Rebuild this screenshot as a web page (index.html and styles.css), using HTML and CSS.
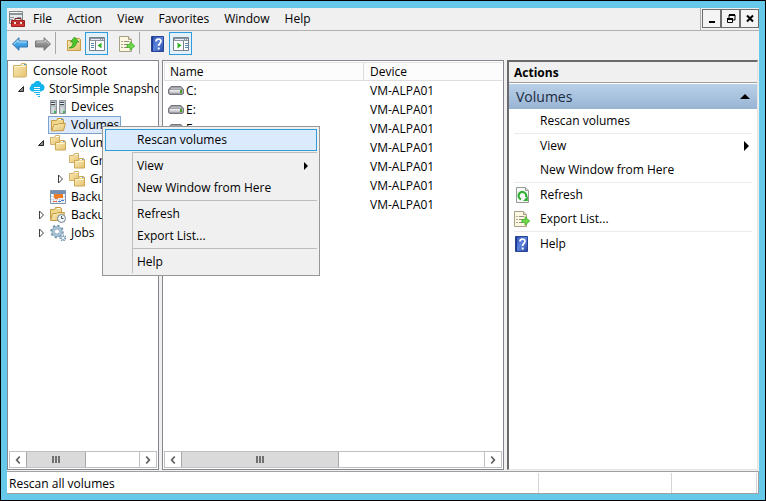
FILE: index.html
```html
<!DOCTYPE html>
<html lang="en">
<head>
<meta charset="utf-8">
<title>StorSimple Snapshot Manager</title>
<link rel="stylesheet" href="styles.css">
</head>
<body>
<svg class="sprite" aria-hidden="true">
  <defs>
    <linearGradient id="gold" x1="0" y1="0" x2="1" y2="1"><stop offset="0" stop-color="#fbedb8"/><stop offset="1" stop-color="#e4c272"/></linearGradient>
    <linearGradient id="blue" x1="0" y1="0" x2="0" y2="1"><stop offset="0" stop-color="#7cc9f5"/><stop offset="1" stop-color="#1583d8"/></linearGradient>
    <linearGradient id="gray" x1="0" y1="0" x2="0" y2="1"><stop offset="0" stop-color="#b5b5b5"/><stop offset="1" stop-color="#6d6d6d"/></linearGradient>
    <linearGradient id="navy" x1="0" y1="0" x2="1" y2="1"><stop offset="0" stop-color="#2c4fb0"/><stop offset=".5" stop-color="#5c83de"/><stop offset="1" stop-color="#2949a6"/></linearGradient>
    <linearGradient id="metal" x1="0" y1="0" x2="0" y2="1"><stop offset="0" stop-color="#f4f4f6"/><stop offset="1" stop-color="#b4b4bc"/></linearGradient>
  </defs>
  <symbol id="folder" viewBox="0 0 16 16">
    <path d="M1.500 2.500h7l1-2h4l1 1v11.500l-1 1h-12z" fill="url(#gold)" stroke="#d3b069"/>
    <path d="M2.500 3.500h11" stroke="#fff6cd"/><path d="M10 1.500h3" stroke="#fff"/><path d="M12 1.500h2" stroke="#4f97d4"/>
  </symbol>
  <symbol id="folder-open" viewBox="0 0 16 16">
    <path d="M1.500 13V3.500h5l1-2h5l1 1V8" fill="#f0d78e" stroke="#c49a45"/>
    <path d="M9 2.500h3" stroke="#fff"/><path d="M11 2.500h2" stroke="#4f97d4"/>
    <path d="M1.500 14l2.500-6.500h4l1-1h6.500l-2 7z" fill="url(#gold)" stroke="#c49a45"/>
  </symbol>
  <symbol id="folders" viewBox="0 0 16 16">
    <path d="M.5 2.500h4l1-2h4v9H.5z" fill="url(#gold)" stroke="#d3b069"/><path d="M6 1.500h3" stroke="#fff"/>
    <path d="M5.500 7.500h4l1-2h4l1 1v8.500h-10z" fill="url(#gold)" stroke="#cca754"/><path d="M6.500 8.500h8" stroke="#fff6cd"/><path d="M11 6.500h2" stroke="#fff"/><path d="M13 6.500h1.500" stroke="#4f97d4"/>
  </symbol>
  <symbol id="folder-clock" viewBox="0 0 16 16">
    <path d="M.5 12.500V2.500h4l1-2h5l1 1V6" fill="#f0d78e" stroke="#c49a45"/><path d="M7 1.500h3" stroke="#fff"/>
    <path d="M.5 13.500l2-7h4l1-1h7l-2 8z" fill="url(#gold)" stroke="#c49a45"/>
    <circle cx="11.500" cy="11.500" r="4" fill="#eef5fa" stroke="#72828d"/><path d="M11.500 9v2.500h2" fill="none" stroke="#4b5a66"/>
  </symbol>
  <symbol id="cloud" viewBox="0 0 16 16">
    <path d="M3 10.500a3 3 0 0 1-1-5.500A2.500 2.500 0 0 1 5 2.500 3.900 3.900 0 0 1 12.500 3 3.600 3.600 0 0 1 13 10l-1 .5z" fill="#12b4ee"/>
    <path d="M5 6.500h6M5 8.500h6M5 10.500h6M5 12.500h6" stroke="#fff"/><path d="M5 7.500h6M5 9.500h6M5 11.500h6M7 13.500h4M9 15.500h2" stroke="#12b4ee"/>
  </symbol>
  <symbol id="servers" viewBox="0 0 16 16">
    <path d="M.5 1.500h6v13h-6zM9.500 1.500h6v13h-6z" fill="#b9c1c4" stroke="#8b979c"/>
    <path d="M1 3.500h4M1 5.500h4M10 3.500h4M10 5.500h4" stroke="#3f4a4f"/><path d="M1 4.500h4M10 4.500h4" stroke="#eef"/>
    <path d="M1.500 8h3v6h-3zM10.500 8h3v6h-3z" fill="#d3dadd"/><path d="M4 12h2v2H4zM13 12h2v2h-2z" fill="#38b54a"/>
  </symbol>
  <symbol id="calendar" viewBox="0 0 16 16">
    <path d="M.5 1.500h15v13H.5z" fill="#f6f8fb" stroke="#8093ab"/><path d="M1 2h14v3H1z" fill="#7291b5"/>
    <path d="M1 7.500h14M1 10.500h14M3.500 5v9M6.500 5v9M9.500 5v9M12.500 5v9" stroke="#d4dbe4"/>
    <path d="M4 5h9v4H8v1H5V9H4z" fill="#ed7c28"/><path d="M3 12.500h4" stroke="#e06a48"/><path d="M8 12.500h3M11 11.500h3" stroke="#4e7bc8"/>
  </symbol>
  <symbol id="gears" viewBox="0 0 16 16">
    <circle cx="7" cy="6.500" r="5.800" fill="none" stroke="#7795ab" stroke-width="2" stroke-dasharray="2.200 2.300"/>
    <circle cx="7" cy="6.500" r="4" fill="none" stroke="#a5c3d8" stroke-width="2.500"/><circle cx="7" cy="6.500" r="5.200" fill="none" stroke="#7795ab" stroke-width=".6"/><circle cx="7" cy="6.500" r="2.500" fill="#fff" stroke="#7795ab" stroke-width=".7"/>
    <circle cx="13" cy="13" r="2.700" fill="#fff" stroke="#7795ab" stroke-width="1.500" stroke-dasharray="1.400 1"/><circle cx="13" cy="13" r="1.600" fill="none" stroke="#8fb3cc"/>
  </symbol>
  <symbol id="drive" viewBox="0 0 16 16">
    <path d="M3 3.500h10l2.500 3v4l-1 1h-13l-1-1v-4z" fill="#8b8b93" stroke="#76767e"/><path d="M3.500 4.500h9l1.500 2H2z" fill="#b9b9c0"/>
    <path d="M1.500 7h13v3.500h-13z" fill="url(#metal)"/><path d="M12 7h2v3h-2z" fill="#45a32b"/>
  </symbol>
  <symbol id="toolbox" viewBox="0 0 16 16">
    <path d="M.5.5h13v12H.5z" fill="#e6eaec" stroke="#7c8588"/><path d="M1 2h12v2H1z" fill="#8b9699"/><path d="M1 1.500h8" stroke="#fff"/><path d="M1 6.500h4M1 8.500h3M8 6.500h4" stroke="#8b9699"/>
    <path d="M6 10V7.500h6V10" fill="none" stroke="#7c2020"/><path d="M2.500 9.500h13v6h-13z" fill="#d43a35" stroke="#9d201d"/><path d="M2.500 12h13" stroke="#811a18"/><path d="M5 11h2v2H5zM11 11h2v2h-2z" fill="#e9e4e2"/>
  </symbol>
  <symbol id="back" viewBox="0 0 16 16"><path d="M.5 8L7 1.700V5h8.500v6H7v3.300z" fill="url(#blue)" stroke="#3a76ad"/><path d="M2 8l4-4v2h8.500" fill="none" stroke="#a8e0fc"/></symbol>
  <symbol id="forward" viewBox="0 0 16 16"><path d="M15.500 8L9 1.700V5H.5v6H9v3.300z" fill="url(#gray)" stroke="#777"/><path d="M1.500 6H10V4l4 4" fill="none" stroke="#c9c9c9"/></symbol>
  <symbol id="up" viewBox="0 0 16 16">
    <path d="M1.500 4.500h6l1-2h5l1 1v11h-13z" fill="url(#gold)" stroke="#c99d43"/><path d="M10 4.500h3" stroke="#fff"/>
    <path d="M3 12c3-1 4-3 4-6H4.500L8.500 1 13 6h-2.500c0 4-3 6.500-7.500 6z" fill="#4ec62c" stroke="#258f17" stroke-width=".7"/>
  </symbol>
  <symbol id="pane-left" viewBox="0 0 16 16">
    <path d="M.5 1.500h15v13H.5z" fill="#fff" stroke="#77818c"/><path d="M1 2h14v3H1z" fill="#8a96a3"/><path d="M2 3.500h9M12 3.500h1M14 3.500h1" stroke="#e8edf2"/>
    <path d="M6.500 5v9" stroke="#77818c"/><path d="M2 7.500h3M2 9.500h3M2 11.500h3" stroke="#5586ae"/><path d="M12.500 6.500v6L8.500 9.500z" fill="#32b228"/>
  </symbol>
  <symbol id="pane-right" viewBox="0 0 16 16">
    <path d="M.5 1.500h15v13H.5z" fill="#fff" stroke="#77818c"/><path d="M1 2h14v3H1z" fill="#8a96a3"/><path d="M2 3.500h9M12 3.500h1M14 3.500h1" stroke="#e8edf2"/>
    <path d="M10.500 5v9" stroke="#77818c"/><path d="M12 7.500h3M12 9.500h3M12 11.500h3" stroke="#5586ae"/><path d="M4.500 6.500v6l4-3z" fill="#32b228"/>
  </symbol>
  <symbol id="export" viewBox="0 0 16 16">
    <path d="M.5.500h9l3 3v12H.5z" fill="#fdf8df" stroke="#a49f86"/><path d="M9.500.5v3h3" fill="#e6dfbd" stroke="#a49f86"/>
    <path d="M2.500 5.500h1M2.500 8.500h1M2.500 11.500h1" stroke="#555"/><path d="M5 5.500h5M5 8.500h4M5 11.500h4" stroke="#8e8c80"/>
    <path d="M8 8.500h3V5.700l4.800 4.300-4.800 4.300v-2.800H8z" fill="#6ed84a" stroke="#38a321" stroke-width=".7"/>
  </symbol>
  <symbol id="refresh" viewBox="0 0 16 16">
    <path d="M2.500.5h9l3 3v12h-12z" fill="#f7f9f7" stroke="#949b94"/><path d="M11.500.5v3h3" fill="#ddd" stroke="#949b94"/>
    <path d="M7 12.300A3.800 3.800 0 1 1 12 10" fill="none" stroke="#2fae32" stroke-width="2.200"/><path d="M13.800 9v5H9z" fill="#2fae32"/>
  </symbol>
  <symbol id="help" viewBox="0 0 16 16">
    <path d="M1.500.5h12v15h-12z" fill="url(#navy)" stroke="#284392"/><path d="M2.500 1v14" stroke="#183a94"/>
    <path d="M6 5.500C6 2.500 11 2.300 11 5.300c0 2-2.400 2.200-2.400 4.700" fill="none" stroke="#fff" stroke-width="1.700"/><path d="M7.700 11.500h2v2h-2z" fill="#fff"/>
  </symbol>
  <symbol id="minimize" viewBox="0 0 16 16"><path d="M5 10h6v2H5z"/></symbol>
  <symbol id="restore" viewBox="0 0 16 16"><path d="M6 7V4h6v5h-2" fill="none" stroke="#000"/><path d="M6 4h6" stroke="#000" stroke-width="2"/><path d="M4.500 7.500h5v4h-5z" fill="none" stroke="#000"/><path d="M4 8h6" stroke="#000" stroke-width="2"/></symbol>
  <symbol id="close" viewBox="0 0 16 16"><path d="M5 4.500l6 6M11 4.500l-6 6" fill="none" stroke="#000" stroke-width="2"/></symbol>
  <symbol id="chevron-left" viewBox="0 0 16 16"><path d="M10 4L6.500 8l3.500 4" fill="none" stroke="#606060" stroke-width="2"/></symbol>
  <symbol id="chevron-right" viewBox="0 0 16 16"><path d="M6 4l3.500 4L6 12" fill="none" stroke="#606060" stroke-width="2"/></symbol>
  <symbol id="expanded" viewBox="0 0 8 8"><path d="M6.500 1.500v5h-5z" fill="#8a8a8a" stroke="#262626"/></symbol>
  <symbol id="collapsed" viewBox="0 0 8 8"><path d="M2.500 0v8l4-4z" fill="#fff" stroke="#404040"/></symbol>
</svg>

<div class="window">
  <header class="menubar">
    <nav class="menubar-items" aria-label="Main menu">
      <svg class="icon app-icon"><use href="#toolbox"/></svg>
      <button type="button">File</button>
      <button type="button">Action</button>
      <button type="button">View</button>
      <button type="button">Favorites</button>
      <button type="button">Window</button>
      <button type="button">Help</button>
    </nav>
    <div class="window-controls">
      <button type="button" aria-label="Minimize"><svg class="icon"><use href="#minimize"/></svg></button>
      <button type="button" aria-label="Restore"><svg class="icon"><use href="#restore"/></svg></button>
      <button type="button" aria-label="Close"><svg class="icon"><use href="#close"/></svg></button>
    </div>
  </header>

  <div class="toolbar" role="toolbar" aria-label="Standard">
    <button type="button" aria-label="Back"><svg class="icon"><use href="#back"/></svg></button>
    <button type="button" aria-label="Forward"><svg class="icon"><use href="#forward"/></svg></button>
    <span class="tool-divider"></span>
    <button type="button" aria-label="Up one level"><svg class="icon"><use href="#up"/></svg></button>
    <button type="button" class="pressed" aria-label="Console tree" aria-pressed="true"><svg class="icon"><use href="#pane-left"/></svg></button>
    <span class="tool-space"></span>
    <button type="button" aria-label="Export list"><svg class="icon"><use href="#export"/></svg></button>
    <span class="tool-divider"></span>
    <button type="button" aria-label="Help"><svg class="icon"><use href="#help"/></svg></button>
    <button type="button" class="pressed" aria-label="Action pane" aria-pressed="true"><svg class="icon"><use href="#pane-right"/></svg></button>
  </div>

  <main class="panes">
    <section class="pane" aria-label="Console tree">
      <ul class="tree">
        <li class="root"><svg class="icon"><use href="#folder"/></svg><span>Console Root</span></li>
        <li class="level-1"><svg class="twisty"><use href="#expanded"/></svg><svg class="icon"><use href="#cloud"/></svg><span>StorSimple Snapsho</span></li>
        <li class="level-2"><svg class="twisty"></svg><svg class="icon"><use href="#servers"/></svg><span>Devices</span></li>
        <li class="level-2"><svg class="twisty"></svg><span class="selected"><svg class="icon"><use href="#folder-open"/></svg><span>Volumes</span></span></li>
        <li class="level-2"><svg class="twisty"><use href="#expanded"/></svg><svg class="icon"><use href="#folders"/></svg><span>Volume Groups</span></li>
        <li class="level-3"><svg class="twisty"></svg><svg class="icon"><use href="#folders"/></svg><span>Group 1</span></li>
        <li class="level-3"><svg class="twisty"><use href="#collapsed"/></svg><svg class="icon"><use href="#folders"/></svg><span>Group 2</span></li>
        <li class="level-2"><svg class="twisty"></svg><svg class="icon"><use href="#calendar"/></svg><span>Backup Policies</span></li>
        <li class="level-2"><svg class="twisty"><use href="#collapsed"/></svg><svg class="icon"><use href="#folder-clock"/></svg><span>Backup Catalog</span></li>
        <li class="level-2"><svg class="twisty"><use href="#collapsed"/></svg><svg class="icon"><use href="#gears"/></svg><span>Jobs</span></li>
      </ul>
      <div class="scrollbar">
        <button type="button" aria-label="Scroll tree left"><svg class="icon"><use href="#chevron-left"/></svg></button>
        <div class="track"><div class="thumb tree-thumb"><i></i><i></i><i></i></div></div>
        <button type="button" aria-label="Scroll tree right"><svg class="icon"><use href="#chevron-right"/></svg></button>
      </div>
    </section>

    <section class="pane" aria-label="Volumes">
      <div class="list">
        <table>
          <thead><tr><th class="name-column">Name</th><th>Device</th></tr></thead>
          <tbody>
            <tr><td><svg class="icon"><use href="#drive"/></svg>C:</td><td>VM-ALPA01</td></tr>
            <tr><td><svg class="icon"><use href="#drive"/></svg>E:</td><td>VM-ALPA01</td></tr>
            <tr><td><svg class="icon"><use href="#drive"/></svg>F:</td><td>VM-ALPA01</td></tr>
            <tr><td><svg class="icon"><use href="#drive"/></svg>G:</td><td>VM-ALPA01</td></tr>
            <tr><td><svg class="icon"><use href="#drive"/></svg>H:</td><td>VM-ALPA01</td></tr>
            <tr><td><svg class="icon"><use href="#drive"/></svg>I:</td><td>VM-ALPA01</td></tr>
            <tr><td><svg class="icon"><use href="#drive"/></svg>J:</td><td>VM-ALPA01</td></tr>
          </tbody>
        </table>
      </div>
      <div class="scrollbar">
        <button type="button" aria-label="Scroll list left"><svg class="icon"><use href="#chevron-left"/></svg></button>
        <div class="track"><div class="thumb list-thumb"><i></i><i></i><i></i></div></div>
        <button type="button" aria-label="Scroll list right"><svg class="icon"><use href="#chevron-right"/></svg></button>
      </div>
    </section>

    <aside class="actions">
      <h2>Actions</h2>
      <button type="button" class="actions-group" aria-expanded="true">Volumes<span class="arrow-up"></span></button>
      <div class="actions-list">
        <button type="button"><span class="icon"></span>Rescan volumes</button>
        <hr>
        <button type="button"><span class="icon"></span>View<span class="arrow-right"></span></button>
        <button type="button"><span class="icon"></span>New Window from Here</button>
        <hr>
        <button type="button"><svg class="icon"><use href="#refresh"/></svg>Refresh</button>
        <button type="button"><svg class="icon"><use href="#export"/></svg>Export List...</button>
        <hr>
        <button type="button"><svg class="icon"><use href="#help"/></svg>Help</button>
      </div>
    </aside>
  </main>

  <footer class="statusbar">
    <span class="status-text">Rescan all volumes</span>
    <span class="status-cell"></span>
    <span class="status-cell last"></span>
  </footer>
</div>

<div class="context-menu" role="menu" aria-label="Volumes">
  <button type="button" role="menuitem" class="highlighted">Rescan volumes</button>
  <hr>
  <button type="button" role="menuitem">View<span class="arrow-right"></span></button>
  <button type="button" role="menuitem">New Window from Here</button>
  <hr>
  <button type="button" role="menuitem">Refresh</button>
  <button type="button" role="menuitem">Export List...</button>
  <hr>
  <button type="button" role="menuitem">Help</button>
</div>
</body>
</html>
```
FILE: styles.css
```css
* { box-sizing: border-box; }

body {
  margin: 0;
  height: 100vh;
  padding: 7px 6px 6px;
  border: 1px solid #000;
  background: #66c9e9;
  color: #000;
  font: 12px/18px "Open Sans", "Noto Sans", sans-serif;
  overflow: hidden;
}

button {
  margin: 0;
  padding: 0;
  border: 0;
  background: none;
  color: inherit;
  font: inherit;
  text-align: left;
}

.sprite { position: absolute; width: 0; height: 0; }
.icon { display: block; flex: none; width: 16px; height: 16px; }

.window {
  display: flex;
  flex-direction: column;
  height: 100%;
  background: #f0f0f0;
}

/* Menu bar */
.menubar { display: flex; height: 23px; }
.menubar-items {
  display: flex;
  flex: 1;
  align-items: center;
  gap: 15px;
  padding-left: 2px;
  border-right: 1px solid #b0b0b0;
  border-bottom: 1px solid #b0b0b0;
}
.app-icon { margin-right: -7px; }
.window-controls {
  display: flex;
  padding: 1px 0 2px 1px;
  border-bottom: 1px solid #b0b0b0;
}
.window-controls button {
  display: flex;
  align-items: center;
  justify-content: center;
  width: 19px;
  height: 19px;
  border: 1px solid #6e6e6e;
  background: #f4f4f4;
}

/* Toolbar */
.toolbar {
  display: flex;
  align-items: flex-start;
  height: 29px;
  padding: 1px 1px 0;
}
.toolbar button {
  display: flex;
  align-items: center;
  justify-content: center;
  width: 23px;
  height: 23px;
}
.toolbar .pressed { border: 1px solid #2c9be0; background: #e3f1fb; }
.tool-divider {
  width: 7px;
  height: 22px;
  margin-left: 1px;
  border-left: 1px solid #a8a8a8;
}
.tool-space { width: 7px; }

/* Panes */
.panes {
  display: grid;
  flex: 1;
  grid-template-columns: 152px minmax(0, 1fr) 251px;
  gap: 3px;
  min-height: 0;
  padding-right: 1px;
}
.pane {
  display: flex;
  flex-direction: column;
  min-width: 0;
  padding: 1px;
  border: 1px solid #828790;
  background: #fff;
}

/* Console tree */
.tree {
  flex: 1;
  margin: 0 -1px 0 0;
  padding: 0;
  overflow: hidden;
  list-style: none;
}
.tree li {
  display: flex;
  align-items: center;
  gap: 5px;
  height: 18px;
  white-space: nowrap;
}
.twisty { flex: none; width: 8px; height: 8px; }
.root { padding-left: 3px; }
.tree .level-1 { gap: 4px; padding-left: 8px; }
.level-2 { padding-left: 28px; }
.level-3 { padding-left: 47px; }
.selected {
  display: flex;
  align-items: center;
  gap: 5px;
  height: 18px;
  margin-left: -2px;
  padding: 0 1px;
  border: 1px solid #7da2ce;
  background: #dbe9fb;
}

/* Volume list */
.list { flex: 1; overflow: hidden; }
table {
  width: 100%;
  table-layout: fixed;
  border-collapse: separate;
  border-spacing: 0;
}
th {
  height: 19px;
  padding: 0 6px;
  border-top: 1px solid #e2e2e2;
  border-bottom: 1px solid #dedede;
  background: #fcfcfc;
  font-weight: normal;
  line-height: 17px;
  text-align: left;
}
.name-column {
  width: 200px;
  padding-left: 5px;
  border-right: 1px solid #dedede;
  border-left: 1px solid #e2e2e2;
}
td { height: 19px; padding: 1px 6px 0; line-height: 18px; vertical-align: top; }
td:first-child { padding-left: 4px; }
td .icon { float: left; margin: 1px 2px 0 0; }

/* Scroll bars */
.scrollbar { display: flex; height: 17px; border: 1px solid #c0c0c0; }
.scrollbar button {
  display: flex;
  align-items: center;
  justify-content: center;
  width: 16px;
}
.scrollbar .icon { width: 14px; height: 14px; }
.track { flex: 1; border-right: 1px solid #c0c0c0; }
.thumb {
  display: flex;
  align-items: center;
  justify-content: center;
  gap: 1px;
  height: 100%;
  border-right: 1px solid #a8a8a8;
  border-left: 1px solid #a8a8a8;
  background: #dadada;
}
.tree-thumb { width: 53%; }
.list-thumb { width: 52%; }
.thumb i { width: 2px; height: 7px; background: #707070; }

/* Actions pane */
.actions {
  border: 1px solid #e3e3e3;
  border-top: 2px solid #69696e;
  border-left: 2px solid #69696e;
  background: #fff;
}
.actions h2 {
  height: 21px;
  margin: 0 0 1px;
  padding-left: 5px;
  border-bottom: 1px solid #a0a0a0;
  background: #f0f0f0;
  font-size: 12px;
  line-height: 21px;
}
.actions-group {
  display: flex;
  align-items: center;
  justify-content: space-between;
  width: 100%;
  height: 25px;
  padding: 0 7px;
  background: linear-gradient(#b9d0e8, #98b4d4);
  color: #1c2b3c;
  font-size: 14px;
}
.actions-list { padding: 0 5px; }
.actions-list button {
  display: flex;
  align-items: center;
  gap: 10px;
  width: 100%;
  height: 24px;
}
.actions-list hr { height: 1px; margin: 0; border: 0; background: #ebebeb; }
.arrow-up {
  border: 5px solid transparent;
  border-top: 0;
  border-bottom-color: #000;
}
.arrow-right {
  margin-left: auto;
  border: 5px solid transparent;
  border-right: 0;
  border-left-color: #000;
}
.actions-list .arrow-right { margin-right: 3px; }

/* Status bar */
.statusbar {
  display: flex;
  height: 23px;
  margin-top: 1px;
  padding-top: 1px;
  border: 1px solid #a0a0a0;
  border-left: 0;
  background: #fff;
}
.status-text { flex: 1; padding-left: 2px; line-height: 22px; }
.status-cell { width: 133px; border-left: 1px solid #d5d5d5; }
.status-cell.last { width: 86px; margin-right: 1px; border-right: 1px solid #d5d5d5; }

/* Context menu, opened over the selected tree node */
.context-menu {
  position: absolute;
  top: 126px;
  left: 102px;
  width: 218px;
  padding: 2px;
  border: 1px solid #979797;
  background: linear-gradient(#bdbdbd, #bdbdbd) 29px 25px / 1px 121px no-repeat #f0f0f0;
}
.context-menu button {
  display: flex;
  align-items: center;
  width: 100%;
  height: 22px;
  padding: 0 9px 0 32px;
}
.context-menu .highlighted {
  padding-left: 31px;
  border: 1px solid #2e9bd6;
  background: #dbeafd;
}
.context-menu hr {
  height: 1px;
  margin: 1px 0 2px 27px;
  border: 0;
  background: #bdbdbd;
}
.context-menu .arrow-right { border-width: 4px; border-right: 0; }
```
